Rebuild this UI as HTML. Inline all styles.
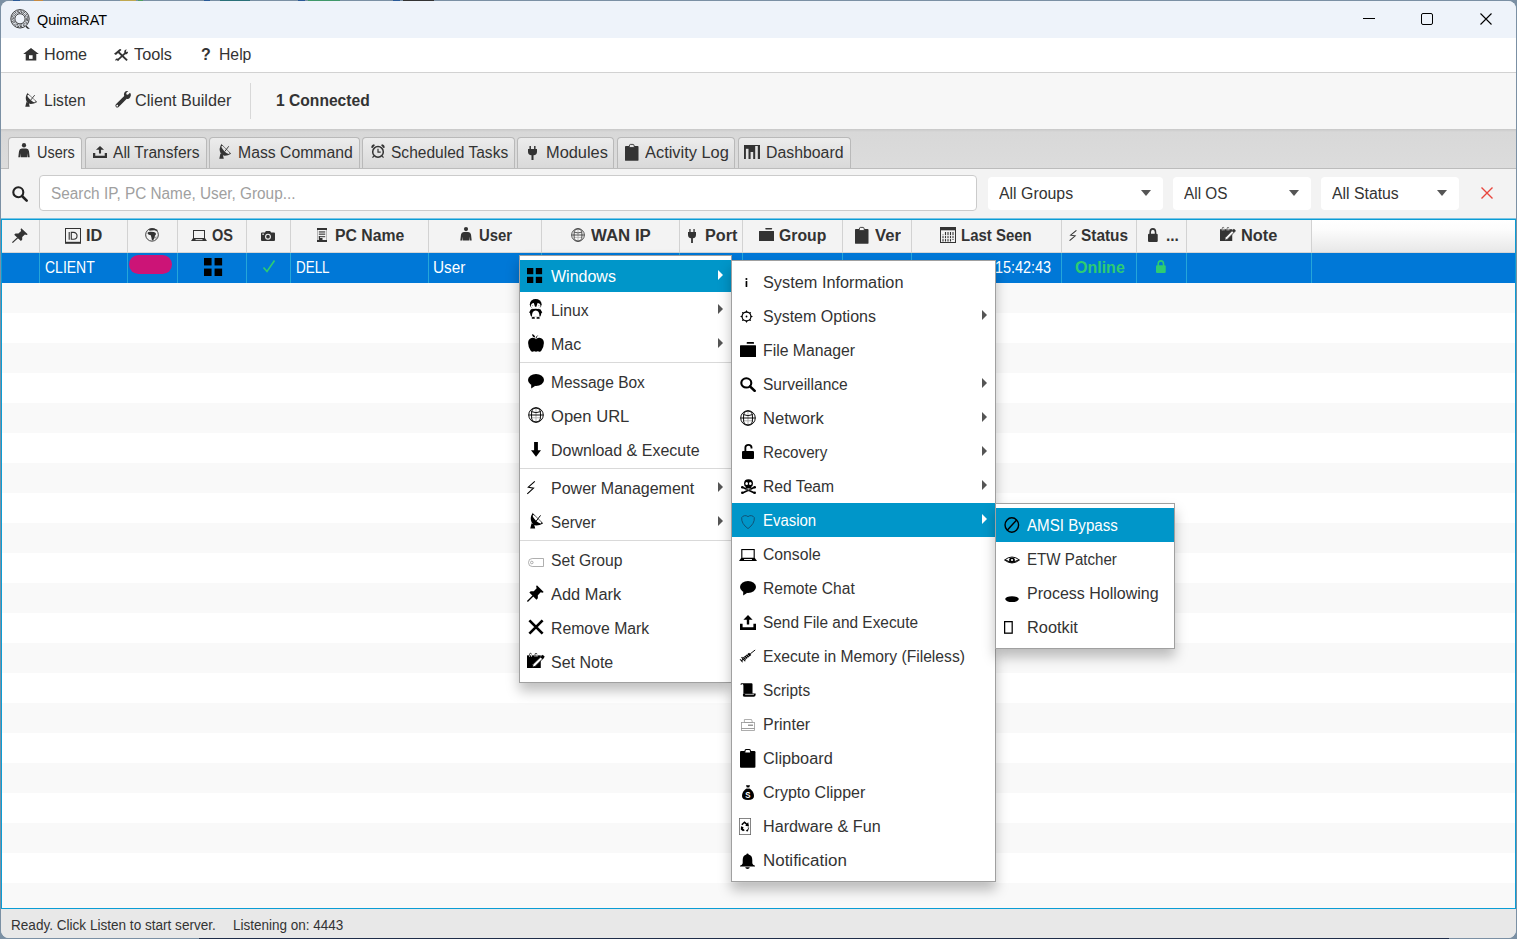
<!DOCTYPE html>
<html><head><meta charset="utf-8"><style>
*{box-sizing:border-box;margin:0;padding:0}
html,body{width:1517px;height:939px;overflow:hidden;background:#7b90a4;font-family:"Liberation Sans",sans-serif;color:#333}
.a{position:absolute}
.t{position:absolute;white-space:nowrap;line-height:16px;font-size:16px}
.b{font-weight:bold}
#win{position:absolute;left:1px;top:1px;width:1515px;height:937px;border-radius:8px;overflow:hidden;background:#f3f3f3}
#pg{position:absolute;left:-1px;top:-1px;width:1517px;height:939px}
svg{position:absolute;overflow:visible}
.tab{position:absolute;border:1px solid #b9b9b9;border-bottom:none;border-radius:4px 4px 0 0;background:linear-gradient(#ececec,#d9d9d9)}
.combo{position:absolute;background:#fff;border-radius:4px}
.arr{position:absolute;width:0;height:0;border-left:5.5px solid transparent;border-right:5.5px solid transparent;border-top:6px solid #555}
.menu{position:absolute;background:#fff;border:1px solid #a0a0a0;box-shadow:0 8px 12px rgba(0,0,0,0.25)}
.sep{position:absolute;height:1px;background:#d9d9d9}
.sa{position:absolute;width:0;height:0;border-top:5px solid transparent;border-bottom:5px solid transparent;border-left:5.5px solid #555}
</style></head><body>
<div class="a" style="left:13px;top:0;width:7px;height:1px;background:#2a5a98"></div>
<div class="a" style="left:34px;top:0;width:9px;height:1px;background:#c88a40"></div>
<div class="a" style="left:120px;top:0;width:16px;height:1px;background:#c0a850"></div>
<div class="a" style="left:138px;top:0;width:5px;height:1px;background:#50a060"></div>
<div class="a" style="left:204px;top:0;width:6px;height:1px;background:#2a5a98"></div>
<div class="a" style="left:220px;top:0;width:30px;height:1px;background:#2a7078"></div>
<div class="a" style="left:298px;top:0;width:7px;height:1px;background:#2a5a98"></div>
<div class="a" style="left:308px;top:0;width:32px;height:1px;background:#40986a"></div>
<div class="a" style="left:393px;top:0;width:7px;height:1px;background:#2a5a98"></div>
<div class="a" style="left:403px;top:0;width:31px;height:1px;background:#333"></div>
<div class="a" style="left:199px;top:938px;width:1250px;height:1px;background:#1f2d4a"></div>
<div id="win"><div id="pg">
<div class="a" style="left:0;top:0;width:1517px;height:38px;background:#eef3fa"></div>
<div class="t" style="left:37px;top:12px;font-size:15px;line-height:15px;color:#000;transform:scaleX(0.958);transform-origin:0 0;">QuimaRAT</div>
<svg style="left:10px;top:9px;color:#222;" width="20" height="20" viewBox="0 0 20 20" preserveAspectRatio="none" fill="currentColor"><g fill="none" stroke="currentColor"><circle cx="10" cy="9.8" r="9.2" stroke-width="0.9"/><circle cx="10" cy="9.8" r="7.8" stroke-width="0.8" stroke-dasharray="2.5 0.8"/><circle cx="10" cy="9.8" r="6.4" stroke-width="0.8" stroke-dasharray="3 0.8"/><circle cx="10" cy="9.8" r="5.1" stroke-width="0.9"/></g><path d="M16.5 16.8L19.9 19.9L17.2 19.6L15.6 17.8Z"/></svg>
<div class="a" style="left:1363px;top:18px;width:12px;height:1px;background:#000"></div>
<div class="a" style="left:1421px;top:13px;width:12px;height:12px;border:1px solid #000;border-radius:2px"></div>
<svg style="left:1480px;top:13px" width="12" height="12" viewBox="0 0 12 12"><path d="M0.5 0.5L11.5 11.5M11.5 0.5L0.5 11.5" stroke="#000" stroke-width="1.1"/></svg>
<div class="a" style="left:0;top:38px;width:1517px;height:34px;background:#fff"></div>
<div class="a" style="left:0;top:72px;width:1517px;height:1px;background:#d2d2d2"></div>
<div class="t" style="left:44px;top:47px;transform:scaleX(1.01);transform-origin:0 0;">Home</div>
<div class="t" style="left:134px;top:47px;transform:scaleX(1.016);transform-origin:0 0;">Tools</div>
<div class="t" style="left:219px;top:47px;transform:scaleX(0.984);transform-origin:0 0;">Help</div>
<svg style="left:23px;top:48px;color:#333;" width="16" height="13" viewBox="0 0 16 14" preserveAspectRatio="none" fill="currentColor"><path d="M8 0L15.8 6.4H13.3V13.4H2.7V6.4H0.2Z"/><rect x="6" y="7.8" width="3.6" height="3.9" fill="#fff"/></svg>
<svg style="left:114px;top:49px;color:#333;" width="14" height="12" viewBox="0 0 14 12" preserveAspectRatio="none" fill="currentColor"><path d="M0 4.7L5.4 0.3Q6.7 -0.3 7.4 0.9L1.9 5.9Z"/><path d="M4.4 3L13.1 11.4" stroke="currentColor" stroke-width="1.9"/><path d="M11.8 3.6L3.6 11.2" stroke="currentColor" stroke-width="1.8"/><path d="M10.3 3.6Q9.8 0.4 12.9 0.5L11.8 2.1L12.7 3.2L14 2.4Q14.3 5.2 11.2 5.2Z"/><path d="M2.4 9.4Q0.4 10.6 1.8 12L2.6 11L3.6 11.5L3.4 12.3Q5.6 11.6 4.4 9.8Z"/></svg>
<div class="t b" style="left:201px;top:47px;">?</div>
<div class="a" style="left:0;top:73px;width:1517px;height:56px;background:#f7f7f7"></div>
<div class="t" style="left:44px;top:93px;transform:scaleX(0.973);transform-origin:0 0;">Listen</div>
<div class="t" style="left:135px;top:93px;transform:scaleX(1.013);transform-origin:0 0;">Client Builder</div>
<div class="a" style="left:250px;top:83px;width:1px;height:36px;background:#d8d8d8"></div>
<div class="t b" style="left:276px;top:93px;transform:scaleX(0.976);transform-origin:0 0;">1 Connected</div>
<svg style="left:25px;top:93px;color:#333;" width="12" height="14" viewBox="0 0 13.3 16" preserveAspectRatio="none" fill="currentColor"><path d="M2.6 0.3Q-0.6 5 1.7 9.6Q3.4 12.2 6.1 12.5Q10 12.6 13.2 10.4Z"/><ellipse cx="7.2" cy="6.3" rx="5.9" ry="1.8" transform="rotate(43.5 7.2 6.3)" fill="#f7f7f7"/><path d="M2.6 0.3L13.2 10.4" stroke="currentColor" stroke-width="0.6"/><path d="M6.4 8L10.8 2.4" stroke="currentColor" stroke-width="1"/><path d="M1.6 10.2L4.2 11.2L5.3 15.6H0.3Z"/></svg>
<svg style="left:115px;top:92px;color:#333;" width="16" height="16" viewBox="0 0 16 16" preserveAspectRatio="none" fill="currentColor"><path d="M15.8 3.8Q16.2 1.8 15 0.7L12.9 2.8L11.5 2.5L11.2 1.1L13.3 -0.9Q11 -1.6 9.6 0.2Q8.4 1.8 9.2 3.9L0.9 12.2Q-0.2 13.4 0.9 14.9Q2.3 16.2 3.6 15L11.8 6.8Q14 7.6 15 5.6Z"/><circle cx="2.2" cy="13.7" r="0.9" fill="#f7f7f7"/></svg>
<div class="a" style="left:0;top:129px;width:1517px;height:40px;background:linear-gradient(#c8c8c8,#d8d8d8 3px,#dcdcdc)"></div>
<div class="a" style="left:0;top:168px;width:1517px;height:1px;background:#bcbcbc"></div>
<div class="tab" style="left:8px;top:137px;width:74px;height:33px;background:#f3f3f3"></div>
<div class="t" style="left:37px;top:145px;transform:scaleX(0.905);transform-origin:0 0;">Users</div>
<svg style="left:18px;top:143px;color:#333;" width="12" height="15" viewBox="0 0 12 14" preserveAspectRatio="none" fill="currentColor"><circle cx="6" cy="2.1" r="2.1"/><path d="M0.3 13.4L1 7.6Q1.4 5.3 3.8 5.1H8.2Q10.6 5.3 11 7.6L11.7 13.4H9.9L9.5 9.5L9.3 13.4H2.7L2.5 9.5L2.1 13.4Z"/></svg>
<div class="tab" style="left:85px;top:137px;width:122px;height:31px"></div>
<div class="t" style="left:113px;top:145px;transform:scaleX(0.973);transform-origin:0 0;">All Transfers</div>
<svg style="left:93px;top:146px;color:#333;" width="14" height="12" viewBox="0 0 16 15" preserveAspectRatio="none" fill="currentColor"><path d="M8 0L12.6 4.7H9.2V9.4H6.8V4.7H3.4Z"/><path d="M0 8.8H2.6V12.3H13.4V8.8H16V15H0Z"/></svg>
<div class="tab" style="left:209px;top:137px;width:151px;height:31px"></div>
<div class="t" style="left:238px;top:145px;transform:scaleX(0.985);transform-origin:0 0;">Mass Command</div>
<svg style="left:219px;top:144px;color:#333;" width="12" height="15" viewBox="0 0 13.3 16" preserveAspectRatio="none" fill="currentColor"><path d="M2.6 0.3Q-0.6 5 1.7 9.6Q3.4 12.2 6.1 12.5Q10 12.6 13.2 10.4Z"/><ellipse cx="7.2" cy="6.3" rx="5.9" ry="1.8" transform="rotate(43.5 7.2 6.3)" fill="#e3e3e3"/><path d="M2.6 0.3L13.2 10.4" stroke="currentColor" stroke-width="0.6"/><path d="M6.4 8L10.8 2.4" stroke="currentColor" stroke-width="1"/><path d="M1.6 10.2L4.2 11.2L5.3 15.6H0.3Z"/></svg>
<div class="tab" style="left:362px;top:137px;width:153px;height:31px"></div>
<div class="t" style="left:391px;top:145px;transform:scaleX(0.971);transform-origin:0 0;">Scheduled Tasks</div>
<svg style="left:371px;top:144px;color:#333;" width="14" height="14" viewBox="0 0 14 14" preserveAspectRatio="none" fill="currentColor"><circle cx="7" cy="7.9" r="5.3" fill="none" stroke="currentColor" stroke-width="1.5"/><path d="M7 4.8V8.1H9.7" fill="none" stroke="currentColor" stroke-width="1.2"/><path d="M0.4 3.8Q0 0.8 3 0.3L3.9 1.3L1.3 4.2Z"/><path d="M13.6 3.8Q14 0.8 11 0.3L10.1 1.3L12.7 4.2Z"/><path d="M2.8 12.1L1.5 13.7M11.2 12.1L12.5 13.7" stroke="currentColor" stroke-width="1.2"/></svg>
<div class="tab" style="left:517px;top:137px;width:97px;height:31px"></div>
<div class="t" style="left:546px;top:145px;transform:scaleX(1.024);transform-origin:0 0;">Modules</div>
<svg style="left:528px;top:146px;color:#333;" width="9" height="14" viewBox="0 0 8 14" preserveAspectRatio="none" fill="currentColor"><rect x="1.3" y="0" width="1.3" height="3.2"/><rect x="5.4" y="0" width="1.3" height="3.2"/><path d="M0 3H8V5.8Q8 8.9 4.9 9.3V14H3.1V9.3Q0 8.9 0 5.8Z"/></svg>
<div class="tab" style="left:617px;top:137px;width:118px;height:31px"></div>
<div class="t" style="left:645px;top:145px;transform:scaleX(1.025);transform-origin:0 0;">Activity Log</div>
<svg style="left:625px;top:144px;color:#333;" width="14" height="17" viewBox="0 0 14 17" preserveAspectRatio="none" fill="currentColor"><rect x="0" y="1.9" width="13.5" height="14.9" rx="0.9"/><path d="M4 3.6L4.6 0.9Q4.8 0.4 5.4 0.4H8.1Q8.7 0.4 8.9 0.9L9.5 3.6Z" fill="#e3e3e3" stroke="currentColor" stroke-width="0.9"/></svg>
<div class="tab" style="left:738px;top:137px;width:113px;height:31px"></div>
<div class="t" style="left:766px;top:145px;transform:scaleX(0.99);transform-origin:0 0;">Dashboard</div>
<svg style="left:744px;top:145px;color:#333;" width="16" height="14" viewBox="0 0 16 14" preserveAspectRatio="none" fill="currentColor"><rect x="0" y="0" width="16" height="14"/><rect x="1.9" y="3.8" width="2.6" height="10.2" fill="#e3e3e3"/><rect x="6.6" y="7" width="2.6" height="7" fill="#e3e3e3"/><rect x="11.2" y="1" width="2.6" height="13" fill="#e3e3e3"/></svg>
<div class="a" style="left:1px;top:169px;width:1515px;height:740px;background:#f3f3f3"></div>
<svg style="left:12px;top:186px;color:#222;" width="16" height="16" viewBox="0 0 16 16" preserveAspectRatio="none" fill="currentColor"><circle cx="6.3" cy="6.3" r="5" fill="none" stroke="currentColor" stroke-width="2.1"/><path d="M10 10L14.7 14.7" stroke="currentColor" stroke-width="2.6" stroke-linecap="round"/></svg>
<div class="a" style="left:39px;top:175px;width:938px;height:36px;background:#fff;border:1px solid #cbcbcb;border-radius:4px"></div>
<div class="t" style="left:51px;top:186px;color:#a0a0a0;transform:scaleX(0.959);transform-origin:0 0;">Search IP, PC Name, User, Group...</div>
<div class="combo" style="left:988px;top:177px;width:175px;height:33px"></div>
<div class="t" style="left:999px;top:186px;transform:scaleX(0.992);transform-origin:0 0;">All Groups</div>
<div class="arr" style="left:1141px;top:190px"></div>
<div class="combo" style="left:1173px;top:177px;width:138px;height:33px"></div>
<div class="t" style="left:1184px;top:186px;transform:scaleX(0.958);transform-origin:0 0;">All OS</div>
<div class="arr" style="left:1289px;top:190px"></div>
<div class="combo" style="left:1321px;top:177px;width:138px;height:33px"></div>
<div class="t" style="left:1332px;top:186px;transform:scaleX(0.988);transform-origin:0 0;">All Status</div>
<div class="arr" style="left:1437px;top:190px"></div>
<svg style="left:1481px;top:187px" width="12" height="12" viewBox="0 0 12 12"><path d="M0.5 0.5L11.5 11.5M11.5 0.5L0.5 11.5" stroke="#e8453c" stroke-width="1.35"/></svg>
<div class="a" style="left:1px;top:218px;width:1515px;height:1px;background:#7cc4e4"></div>
<div class="a" style="left:1px;top:219px;width:1515px;height:690px;border:1px solid #0a9dd5;background:#fff"></div>
<div class="a" style="left:2px;top:253px;width:1513px;height:30px;background:#0078d7"></div>
<div class="a" style="left:2px;top:283px;width:1513px;height:30px;background:#f9f9f9"></div>
<div class="a" style="left:2px;top:313px;width:1513px;height:30px;background:#ffffff"></div>
<div class="a" style="left:2px;top:343px;width:1513px;height:30px;background:#f9f9f9"></div>
<div class="a" style="left:2px;top:373px;width:1513px;height:30px;background:#ffffff"></div>
<div class="a" style="left:2px;top:403px;width:1513px;height:30px;background:#f9f9f9"></div>
<div class="a" style="left:2px;top:433px;width:1513px;height:30px;background:#ffffff"></div>
<div class="a" style="left:2px;top:463px;width:1513px;height:30px;background:#f9f9f9"></div>
<div class="a" style="left:2px;top:493px;width:1513px;height:30px;background:#ffffff"></div>
<div class="a" style="left:2px;top:523px;width:1513px;height:30px;background:#f9f9f9"></div>
<div class="a" style="left:2px;top:553px;width:1513px;height:30px;background:#ffffff"></div>
<div class="a" style="left:2px;top:583px;width:1513px;height:30px;background:#f9f9f9"></div>
<div class="a" style="left:2px;top:613px;width:1513px;height:30px;background:#ffffff"></div>
<div class="a" style="left:2px;top:643px;width:1513px;height:30px;background:#f9f9f9"></div>
<div class="a" style="left:2px;top:673px;width:1513px;height:30px;background:#ffffff"></div>
<div class="a" style="left:2px;top:703px;width:1513px;height:30px;background:#f9f9f9"></div>
<div class="a" style="left:2px;top:733px;width:1513px;height:30px;background:#ffffff"></div>
<div class="a" style="left:2px;top:763px;width:1513px;height:30px;background:#f9f9f9"></div>
<div class="a" style="left:2px;top:793px;width:1513px;height:30px;background:#ffffff"></div>
<div class="a" style="left:2px;top:823px;width:1513px;height:30px;background:#f9f9f9"></div>
<div class="a" style="left:2px;top:853px;width:1513px;height:30px;background:#ffffff"></div>
<div class="a" style="left:2px;top:883px;width:1513px;height:25px;background:#f9f9f9"></div>
<div class="a" style="left:2px;top:220px;width:1513px;height:33px;background:#f3f3f3;border-bottom:1px solid #d6d6d6"></div>
<div class="a" style="left:1312px;top:220px;width:203px;height:32px;background:linear-gradient(#ffffff,#fcfcfc 30%,#e8e8e8)"></div>
<div class="a" style="left:39px;top:220px;width:1px;height:33px;background:#d2d2d2"></div>
<div class="a" style="left:39px;top:253px;width:1px;height:30px;background:#25a6d9"></div>
<div class="a" style="left:127px;top:220px;width:1px;height:33px;background:#d2d2d2"></div>
<div class="a" style="left:127px;top:253px;width:1px;height:30px;background:#25a6d9"></div>
<div class="a" style="left:177px;top:220px;width:1px;height:33px;background:#d2d2d2"></div>
<div class="a" style="left:177px;top:253px;width:1px;height:30px;background:#25a6d9"></div>
<div class="a" style="left:246px;top:220px;width:1px;height:33px;background:#d2d2d2"></div>
<div class="a" style="left:246px;top:253px;width:1px;height:30px;background:#25a6d9"></div>
<div class="a" style="left:290px;top:220px;width:1px;height:33px;background:#d2d2d2"></div>
<div class="a" style="left:290px;top:253px;width:1px;height:30px;background:#25a6d9"></div>
<div class="a" style="left:428px;top:220px;width:1px;height:33px;background:#d2d2d2"></div>
<div class="a" style="left:428px;top:253px;width:1px;height:30px;background:#25a6d9"></div>
<div class="a" style="left:541px;top:220px;width:1px;height:33px;background:#d2d2d2"></div>
<div class="a" style="left:541px;top:253px;width:1px;height:30px;background:#25a6d9"></div>
<div class="a" style="left:679px;top:220px;width:1px;height:33px;background:#d2d2d2"></div>
<div class="a" style="left:679px;top:253px;width:1px;height:30px;background:#25a6d9"></div>
<div class="a" style="left:742px;top:220px;width:1px;height:33px;background:#d2d2d2"></div>
<div class="a" style="left:742px;top:253px;width:1px;height:30px;background:#25a6d9"></div>
<div class="a" style="left:842px;top:220px;width:1px;height:33px;background:#d2d2d2"></div>
<div class="a" style="left:842px;top:253px;width:1px;height:30px;background:#25a6d9"></div>
<div class="a" style="left:911px;top:220px;width:1px;height:33px;background:#d2d2d2"></div>
<div class="a" style="left:911px;top:253px;width:1px;height:30px;background:#25a6d9"></div>
<div class="a" style="left:1061px;top:220px;width:1px;height:33px;background:#d2d2d2"></div>
<div class="a" style="left:1061px;top:253px;width:1px;height:30px;background:#25a6d9"></div>
<div class="a" style="left:1136px;top:220px;width:1px;height:33px;background:#d2d2d2"></div>
<div class="a" style="left:1136px;top:253px;width:1px;height:30px;background:#25a6d9"></div>
<div class="a" style="left:1186px;top:220px;width:1px;height:33px;background:#d2d2d2"></div>
<div class="a" style="left:1186px;top:253px;width:1px;height:30px;background:#25a6d9"></div>
<div class="a" style="left:1311px;top:220px;width:1px;height:33px;background:#d2d2d2"></div>
<div class="a" style="left:1311px;top:253px;width:1px;height:30px;background:#25a6d9"></div>
<div class="t b" style="left:86px;top:228px;transform:scaleX(1.02);transform-origin:0 0;">ID</div>
<div class="t b" style="left:212px;top:228px;transform:scaleX(0.909);transform-origin:0 0;">OS</div>
<div class="t b" style="left:335px;top:228px;transform:scaleX(0.986);transform-origin:0 0;">PC Name</div>
<div class="t b" style="left:479px;top:228px;transform:scaleX(0.931);transform-origin:0 0;">User</div>
<div class="t b" style="left:591px;top:228px;transform:scaleX(1.051);transform-origin:0 0;">WAN IP</div>
<div class="t b" style="left:705px;top:228px;transform:scaleX(1.01);transform-origin:0 0;">Port</div>
<div class="t b" style="left:779px;top:228px;transform:scaleX(0.985);transform-origin:0 0;">Group</div>
<div class="t b" style="left:875px;top:228px;transform:scaleX(1.04);transform-origin:0 0;">Ver</div>
<div class="t b" style="left:961px;top:228px;transform:scaleX(0.935);transform-origin:0 0;">Last Seen</div>
<div class="t b" style="left:1081px;top:228px;transform:scaleX(0.963);transform-origin:0 0;">Status</div>
<div class="t b" style="left:1166px;top:228px;transform:scaleX(0.967);transform-origin:0 0;">...</div>
<div class="t b" style="left:1241px;top:228px;transform:scaleX(1.023);transform-origin:0 0;">Note</div>
<svg style="left:12px;top:228px;color:#333;" width="16" height="15" viewBox="0 0 16 16" preserveAspectRatio="none" fill="currentColor"><path d="M9.3 0.3L15.7 6.7L14.6 7.4L12.9 6.9L10.2 9.6L10.2 12.5L8.9 13.8L2.2 7.1L3.5 5.8L6.4 5.8L9.1 3.1L8.6 1.4Z"/><path d="M5.8 10.2L0.4 15.6" stroke="currentColor" stroke-width="1.3"/></svg>
<svg style="left:65px;top:228px;color:#333;" width="16" height="16" viewBox="0 0 16 16" preserveAspectRatio="none" fill="currentColor"><rect x="0.5" y="0.5" width="15" height="14" fill="none" stroke="currentColor" stroke-width="1"/><rect x="0" y="13.8" width="16" height="2"/><path d="M4.2 3.9V11.8" stroke="currentColor" stroke-width="1.1"/><path d="M6.3 4.4H8.6A3.4 3.4 0 0 1 8.6 11.3H6.3Z" fill="none" stroke="currentColor" stroke-width="1.1"/></svg>
<svg style="left:145px;top:228px;color:#333;" width="14" height="14" viewBox="0 0 15 15" preserveAspectRatio="none" fill="currentColor"><circle cx="7.5" cy="7.3" r="6.8" fill="none" stroke="currentColor" stroke-width="1"/><path d="M4.3 1.3Q9 -0.2 13.2 1.8L13.8 2.9L11.8 3L10 2.5L7 2.7L4.6 3Z"/><path d="M2.9 4.7Q3.4 4.1 6 4.1L9.6 4.2L11.5 5.3L11.7 7L10.6 8.3L10.3 10.5L9.3 12.3L8.2 13.4L7.3 12.6L6.8 10L6.2 7.7L4.2 7.3L2.8 6.1Z"/><path d="M11.4 9.5L12.2 9.2L12 11.1L11.3 11.2Z"/></svg>
<svg style="left:191px;top:230px;color:#333;" width="16" height="11" viewBox="0 0 16 11" preserveAspectRatio="none" fill="currentColor"><rect x="2.5" y="0.5" width="11" height="8" fill="none" stroke="currentColor" stroke-width="1"/><path d="M0 11L1.9 8.3H14.1L16 11Z"/><path d="M4.5 9.6H11.5" stroke="#f3f3f3" stroke-width="0.9"/></svg>
<svg style="left:261px;top:231px;color:#333;" width="14" height="10" viewBox="0 0 14 10" preserveAspectRatio="none" fill="currentColor"><path d="M0 2.6Q0 1.6 1 1.6H3.9L4.9 0H9.1L10.1 1.6H13Q14 1.6 14 2.6V9Q14 10 13 10H1Q0 10 0 9Z"/><circle cx="7" cy="5.7" r="2.4" fill="none" stroke="#f3f3f3" stroke-width="1.1"/><rect x="1.3" y="2.6" width="1.6" height="1.2" fill="#f3f3f3"/></svg>
<svg style="left:317px;top:228px;color:#333;" width="10" height="14" viewBox="0 0 10 14" preserveAspectRatio="none" fill="currentColor"><rect x="0.4" y="0.5" width="9.2" height="13" fill="none" stroke="currentColor" stroke-width="0.7" stroke-opacity="0.45"/><rect x="0" y="0" width="10" height="2"/><rect x="1.8" y="3.4" width="6.4" height="1.1"/><rect x="1.8" y="5.6" width="6.4" height="1.1"/><rect x="1.8" y="8.2" width="6.4" height="1"/><rect x="1.8" y="8.2" width="1.2" height="4"/><rect x="0" y="12" width="10" height="2"/><rect x="3" y="10" width="2.5" height="2"/></svg>
<svg style="left:460px;top:227px;color:#333;" width="12" height="14" viewBox="0 0 12 14" preserveAspectRatio="none" fill="currentColor"><circle cx="6" cy="2.1" r="2.1"/><path d="M0.3 13.4L1 7.6Q1.4 5.3 3.8 5.1H8.2Q10.6 5.3 11 7.6L11.7 13.4H9.9L9.5 9.5L9.3 13.4H2.7L2.5 9.5L2.1 13.4Z"/></svg>
<svg style="left:571px;top:228px;color:#333;" width="14" height="14" viewBox="0 0 16 16" preserveAspectRatio="none" fill="currentColor"><g fill="none" stroke-width="0.95"><path d="M8 1V15M3.6 10.8H12.4" stroke="#b0b0b0"/><circle cx="8" cy="8" r="7.3" stroke="currentColor"/><path d="M3.7 4Q3.3 8 3.7 12Q4.6 15 8 15.1Q11.4 15 12.3 12Q12.7 8 12.3 4Q11.4 1 8 0.9Q4.6 1 3.7 4Z" stroke="currentColor"/><path d="M0.7 8H15.3M3.6 4.6Q8 6.8 12.4 4.6" stroke="currentColor"/></g></svg>
<svg style="left:688px;top:229px;color:#333;" width="8" height="14" viewBox="0 0 8 14" preserveAspectRatio="none" fill="currentColor"><rect x="1.3" y="0" width="1.3" height="3.2"/><rect x="5.4" y="0" width="1.3" height="3.2"/><path d="M0 3H8V5.8Q8 8.9 4.9 9.3V14H3.1V9.3Q0 8.9 0 5.8Z"/></svg>
<svg style="left:759px;top:228px;color:#333;" width="15" height="13" viewBox="0 0 15 13" preserveAspectRatio="none" fill="currentColor"><rect x="6.2" y="0" width="7" height="1.6" rx="0.8"/><rect x="0" y="2.9" width="15" height="10.1" rx="0.3"/></svg>
<svg style="left:855px;top:227px;color:#333;" width="14" height="17" viewBox="0 0 14 17" preserveAspectRatio="none" fill="currentColor"><rect x="0" y="1.9" width="13.5" height="14.9" rx="0.9"/><path d="M4 3.6L4.6 0.9Q4.8 0.4 5.4 0.4H8.1Q8.7 0.4 8.9 0.9L9.5 3.6Z" fill="#f3f3f3" stroke="currentColor" stroke-width="0.9"/></svg>
<svg style="left:940px;top:227px;color:#333;" width="16" height="16" viewBox="0 0 16 16" preserveAspectRatio="none" fill="currentColor"><rect x="0.5" y="0.5" width="15" height="15" fill="none" stroke="currentColor" stroke-width="1"/><rect x="0" y="0" width="16" height="3.3"/><path d="M3 7.5V14.5M5.5 5V14.5M8 5V14.5M10.5 5V14.5M13 5V13" stroke="currentColor" stroke-width="1.1"/><path d="M1 8.6H15M1 11.6H15" stroke="#f3f3f3" stroke-width="0.9"/></svg>
<svg style="left:1069px;top:230px;color:#333;" width="8" height="11" viewBox="0 0 8 12" preserveAspectRatio="none" fill="currentColor"><path d="M7.4 0.4L1.6 5.7L6.2 6.3L0.6 11.6" fill="none" stroke="currentColor" stroke-width="1.05"/></svg>
<svg style="left:1148px;top:228px;color:#333;" width="10" height="14" viewBox="0 0 11 13" preserveAspectRatio="none" fill="currentColor"><path d="M2.4 6V4Q2.4 0.8 5.35 0.8Q8.3 0.8 8.3 4V6" fill="none" stroke="currentColor" stroke-width="1.7"/><rect x="0" y="5.3" width="10.7" height="7.7" rx="1.2"/></svg>
<svg style="left:1220px;top:227px;color:#333;" width="16" height="14" viewBox="0 0 17 14" preserveAspectRatio="none" fill="currentColor"><rect x="0" y="2.2" width="13" height="11.8"/><path d="M2.4 3.5V1.3Q2.4 0.3 3.3 0.3Q4.2 0.3 4.2 1.3V3.5M7.6 3.5V1.3Q7.6 0.3 8.5 0.3Q9.4 0.3 9.4 1.3V3.5" fill="none" stroke="#f3f3f3" stroke-width="0.8"/><path d="M2.4 2.5V1.3Q2.4 0.3 3.3 0.3Q4.2 0.3 4.2 1.3M7.6 2.5V1.3Q7.6 0.3 8.5 0.3Q9.4 0.3 9.4 1.3" fill="none" stroke="currentColor" stroke-width="0.7"/><path d="M5.2 13.2L5.6 10.6L14 2.6L15.9 4.4L7.6 12.5Z" fill="#f3f3f3" stroke="currentColor" stroke-width="0.8"/><path d="M12.6 3.9L14.6 5.8L16.8 3.6L14.8 1.7Z"/></svg>
<div class="t" style="left:45px;top:260px;color:#fff;transform:scaleX(0.874);transform-origin:0 0;">CLIENT</div>
<div class="a" style="left:129px;top:255px;width:43px;height:19px;border-radius:10px;background:#cc1477"></div>
<svg style="left:204px;top:258px;color:#000;" width="18" height="18" viewBox="0 0 15 15" preserveAspectRatio="none" fill="currentColor"><rect x="0" y="0" width="6.3" height="6.2"/><rect x="8.8" y="0" width="6.3" height="6.2"/><rect x="0" y="8.8" width="6.3" height="6.2"/><rect x="8.8" y="8.8" width="6.3" height="6.2"/></svg>
<svg style="left:262px;top:259px" width="14" height="14" viewBox="0 0 14 14"><path d="M1.5 8.5L5 12.5L12.5 1.5" stroke="#2ecc71" stroke-width="1.6" fill="none"/></svg>
<div class="t" style="left:296px;top:260px;color:#fff;transform:scaleX(0.838);transform-origin:0 0;">DELL</div>
<div class="t" style="left:433px;top:260px;color:#fff;transform:scaleX(0.958);transform-origin:0 0;">User</div>
<div class="t" style="left:995px;top:260px;color:#fff;transform:scaleX(0.9);transform-origin:0 0;">15:42:43</div>
<div class="t b" style="left:1075px;top:260px;color:#2ecc71;">Online</div>
<svg style="left:1156px;top:260px;color:#2ecc71;" width="10" height="13" viewBox="0 0 11 13" preserveAspectRatio="none" fill="currentColor"><path d="M2.4 6V4Q2.4 0.8 5.35 0.8Q8.3 0.8 8.3 4V6" fill="none" stroke="currentColor" stroke-width="1.7"/><rect x="0" y="5.3" width="10.7" height="7.7" rx="1.2"/></svg>
<div class="a" style="left:0;top:909px;width:1517px;height:30px;background:#e8e8e8"></div>
<div class="t" style="left:11px;top:918px;font-size:14px;line-height:14px;transform:scaleX(0.969);transform-origin:0 0;">Ready. Click Listen to start server.</div>
<div class="t" style="left:233px;top:918px;font-size:14px;line-height:14px;transform:scaleX(0.963);transform-origin:0 0;">Listening on: 4443</div>
<div class="menu" style="left:519px;top:255px;width:213px;height:428px"></div>
<div class="a" style="left:520px;top:260px;width:211px;height:32px;background:#0096c9"></div>
<div class="t" style="left:551px;top:269px;color:#fff;">Windows</div>
<svg style="left:527px;top:268px;color:#000;" width="15" height="15" viewBox="0 0 15 15" preserveAspectRatio="none" fill="currentColor"><rect x="0" y="0" width="6.3" height="6.2"/><rect x="8.8" y="0" width="6.3" height="6.2"/><rect x="0" y="8.8" width="6.3" height="6.2"/><rect x="8.8" y="8.8" width="6.3" height="6.2"/></svg>
<div class="sa" style="left:718px;top:270px;border-left-color:#fff"></div>
<div class="t" style="left:551px;top:303px;color:#333;transform:scaleX(0.981);transform-origin:0 0;">Linux</div>
<svg style="left:529px;top:299px;color:#000;" width="14" height="20" viewBox="0 0 14 20" preserveAspectRatio="none" fill="currentColor"><ellipse cx="6.7" cy="5.2" rx="5.9" ry="5.1"/><ellipse cx="6.7" cy="6.9" rx="4.8" ry="3.1" fill="#fff"/><path d="M4.6 3.2Q6.7 2.6 8.8 3.2L7.4 7.8H6Z"/><circle cx="3.6" cy="6.6" r="0.6" fill="#999"/><circle cx="9.8" cy="6.6" r="0.6" fill="#999"/><path d="M2 10.3Q6.7 9.4 11.4 10.3L13.3 13.6L12.4 14.1Q12.1 16.6 11.3 17.4H2.1Q1.3 16.6 1 14.1L0.1 13.6Z"/><path d="M2.9 17.8Q2.9 11.6 6.7 11.6Q10.5 11.6 10.5 17.8Z" fill="#fff"/><ellipse cx="4.3" cy="18.9" rx="1.7" ry="0.9"/><ellipse cx="9.1" cy="18.9" rx="1.7" ry="0.9"/></svg>
<div class="sa" style="left:718px;top:304px;border-left-color:#555"></div>
<div class="t" style="left:551px;top:337px;color:#333;">Mac</div>
<svg style="left:528px;top:334px;color:#000;" width="16" height="18" viewBox="0 0 16 18" preserveAspectRatio="none" fill="currentColor"><path d="M8 5.2Q10.5 3.2 13.2 4.2Q15.8 5.3 15.9 9Q15.8 13.5 13.3 16.8Q12.2 18.2 10.8 17.6Q9.7 17 8 17.7Q6.3 17 5.2 17.6Q3.8 18.2 2.7 16.8Q0.2 13.5 0.1 9Q0.2 5.3 2.8 4.2Q5.5 3.2 8 5.2Z"/><path d="M4 0.2Q6.8 0.6 7.2 3.6Q4.6 3.4 4 0.2Z"/><path d="M8 4.6Q8.2 2.6 9.6 1.6" stroke="currentColor" stroke-width="0.9" fill="none"/></svg>
<div class="sa" style="left:718px;top:338px;border-left-color:#555"></div>
<div class="sep" style="left:520px;top:362px;width:211px"></div>
<div class="t" style="left:551px;top:375px;color:#333;transform:scaleX(0.968);transform-origin:0 0;">Message Box</div>
<svg style="left:528px;top:374px;color:#000;" width="16" height="15" viewBox="0 0 16 15" preserveAspectRatio="none" fill="currentColor"><ellipse cx="8" cy="6" rx="8" ry="6"/><path d="M3.2 10.2L3.2 14.5L7.8 11.5Z"/></svg>
<div class="t" style="left:551px;top:409px;color:#333;transform:scaleX(1.036);transform-origin:0 0;">Open URL</div>
<svg style="left:528px;top:407px;color:#000;" width="16" height="16" viewBox="0 0 16 16" preserveAspectRatio="none" fill="currentColor"><g fill="none" stroke-width="0.95"><path d="M8 1V15M3.6 10.8H12.4" stroke="#b0b0b0"/><circle cx="8" cy="8" r="7.3" stroke="currentColor"/><path d="M3.7 4Q3.3 8 3.7 12Q4.6 15 8 15.1Q11.4 15 12.3 12Q12.7 8 12.3 4Q11.4 1 8 0.9Q4.6 1 3.7 4Z" stroke="currentColor"/><path d="M0.7 8H15.3M3.6 4.6Q8 6.8 12.4 4.6" stroke="currentColor"/></g></svg>
<div class="t" style="left:551px;top:443px;color:#333;">Download &amp; Execute</div>
<svg style="left:531px;top:442px;color:#000;" width="10" height="15" viewBox="0 0 10 15" preserveAspectRatio="none" fill="currentColor"><path d="M3.1 0H6.9V8.2H10L5 14.7L0 8.2H3.1Z"/></svg>
<div class="sep" style="left:520px;top:468px;width:211px"></div>
<div class="t" style="left:551px;top:481px;color:#333;">Power Management</div>
<svg style="left:527px;top:481px;color:#000;" width="8" height="13" viewBox="0 0 8 13" preserveAspectRatio="none" fill="currentColor"><path d="M7.8 0.4L1.3 6.2L6.5 7.2L0.3 12.8" fill="none" stroke="currentColor" stroke-width="1.1"/></svg>
<div class="sa" style="left:718px;top:482px;border-left-color:#555"></div>
<div class="t" style="left:551px;top:515px;color:#333;transform:scaleX(0.952);transform-origin:0 0;">Server</div>
<svg style="left:530px;top:513px;color:#000;" width="13" height="16" viewBox="0 0 13.3 16" preserveAspectRatio="none" fill="currentColor"><path d="M2.6 0.3Q-0.6 5 1.7 9.6Q3.4 12.2 6.1 12.5Q10 12.6 13.2 10.4Z"/><ellipse cx="7.2" cy="6.3" rx="5.9" ry="1.8" transform="rotate(43.5 7.2 6.3)" fill="#fff"/><path d="M2.6 0.3L13.2 10.4" stroke="currentColor" stroke-width="0.6"/><path d="M6.4 8L10.8 2.4" stroke="currentColor" stroke-width="1"/><path d="M1.6 10.2L4.2 11.2L5.3 15.6H0.3Z"/></svg>
<div class="sa" style="left:718px;top:516px;border-left-color:#555"></div>
<div class="sep" style="left:520px;top:540px;width:211px"></div>
<div class="t" style="left:551px;top:553px;color:#333;transform:scaleX(0.981);transform-origin:0 0;">Set Group</div>
<svg style="left:528px;top:558px;color:#9a9a9a;" width="16" height="9" viewBox="0 0 16 9" preserveAspectRatio="none" fill="currentColor"><path d="M4.2 0.5H15.5V8.5H4.2Q0.5 8.5 0.5 4.5Q0.5 0.5 4.2 0.5Z" fill="none" stroke="currentColor" stroke-width="0.8"/><circle cx="3.8" cy="4.5" r="1.3" fill="none" stroke="currentColor" stroke-width="0.8"/></svg>
<div class="t" style="left:551px;top:587px;color:#333;transform:scaleX(1.025);transform-origin:0 0;">Add Mark</div>
<svg style="left:527px;top:585px;color:#000;" width="17" height="17" viewBox="0 0 16 16" preserveAspectRatio="none" fill="currentColor"><path d="M9.3 0.3L15.7 6.7L14.6 7.4L12.9 6.9L10.2 9.6L10.2 12.5L8.9 13.8L2.2 7.1L3.5 5.8L6.4 5.8L9.1 3.1L8.6 1.4Z"/><path d="M5.8 10.2L0.4 15.6" stroke="currentColor" stroke-width="1.3"/></svg>
<div class="t" style="left:551px;top:621px;color:#333;transform:scaleX(0.986);transform-origin:0 0;">Remove Mark</div>
<svg style="left:528px;top:619px;color:#000;" width="16" height="16" viewBox="0 0 16 16" preserveAspectRatio="none" fill="currentColor"><path d="M1.4 1.4L14.6 14.6M14.6 1.4L1.4 14.6" stroke="currentColor" stroke-width="2.7"/></svg>
<div class="t" style="left:551px;top:655px;color:#333;">Set Note</div>
<svg style="left:527px;top:653px;color:#000;" width="18" height="15" viewBox="0 0 17 14" preserveAspectRatio="none" fill="currentColor"><rect x="0" y="2.2" width="13" height="11.8"/><path d="M2.4 3.5V1.3Q2.4 0.3 3.3 0.3Q4.2 0.3 4.2 1.3V3.5M7.6 3.5V1.3Q7.6 0.3 8.5 0.3Q9.4 0.3 9.4 1.3V3.5" fill="none" stroke="#fff" stroke-width="0.8"/><path d="M2.4 2.5V1.3Q2.4 0.3 3.3 0.3Q4.2 0.3 4.2 1.3M7.6 2.5V1.3Q7.6 0.3 8.5 0.3Q9.4 0.3 9.4 1.3" fill="none" stroke="currentColor" stroke-width="0.7"/><path d="M5.2 13.2L5.6 10.6L14 2.6L15.9 4.4L7.6 12.5Z" fill="#fff" stroke="currentColor" stroke-width="0.8"/><path d="M12.6 3.9L14.6 5.8L16.8 3.6L14.8 1.7Z"/></svg>
<div class="menu" style="left:731px;top:260px;width:265px;height:622px"></div>
<div class="t" style="left:763px;top:275px;color:#333;transform:scaleX(1.019);transform-origin:0 0;">System Information</div>
<svg style="left:745px;top:278px;color:#000;" width="3" height="9" viewBox="0 0 3 9" preserveAspectRatio="none" fill="currentColor"><circle cx="1.4" cy="1" r="1.05"/><rect x="0.6" y="3" width="1.7" height="6" rx="0.5"/></svg>
<div class="t" style="left:763px;top:309px;color:#333;">System Options</div>
<svg style="left:740px;top:310px;color:#000;" width="13" height="13" viewBox="0 0 13 13" preserveAspectRatio="none" fill="currentColor"><circle cx="6.5" cy="6.5" r="4.4" fill="none" stroke="currentColor" stroke-width="1.15"/><circle cx="6.5" cy="6.5" r="0.9"/><path d="M6.5 0L7.6 2.1H5.4ZM6.5 13L7.6 10.9H5.4ZM0 6.5L2.1 5.4V7.6ZM13 6.5L10.9 5.4V7.6ZM1.9 1.9L4.1 2.6L2.6 4.1ZM11.1 1.9L8.9 2.6L10.4 4.1ZM1.9 11.1L4.1 10.4L2.6 8.9ZM11.1 11.1L8.9 10.4L10.4 8.9Z"/></svg>
<div class="sa" style="left:982px;top:310px;border-left-color:#555"></div>
<div class="t" style="left:763px;top:343px;color:#333;transform:scaleX(0.986);transform-origin:0 0;">File Manager</div>
<svg style="left:740px;top:342px;color:#000;" width="16" height="15" viewBox="0 0 15 13" preserveAspectRatio="none" fill="currentColor"><rect x="6.2" y="0" width="7" height="1.6" rx="0.8"/><rect x="0" y="2.9" width="15" height="10.1" rx="0.3"/></svg>
<div class="t" style="left:763px;top:377px;color:#333;transform:scaleX(0.972);transform-origin:0 0;">Surveillance</div>
<svg style="left:740px;top:377px;color:#000;" width="16" height="15" viewBox="0 0 16 16" preserveAspectRatio="none" fill="currentColor"><circle cx="6.3" cy="6.3" r="5" fill="none" stroke="currentColor" stroke-width="2.1"/><path d="M10 10L14.7 14.7" stroke="currentColor" stroke-width="2.6" stroke-linecap="round"/></svg>
<div class="sa" style="left:982px;top:378px;border-left-color:#555"></div>
<div class="t" style="left:763px;top:411px;color:#333;transform:scaleX(1.038);transform-origin:0 0;">Network</div>
<svg style="left:740px;top:410px;color:#000;" width="16" height="16" viewBox="0 0 16 16" preserveAspectRatio="none" fill="currentColor"><g fill="none" stroke-width="0.95"><path d="M8 1V15M3.6 10.8H12.4" stroke="#b0b0b0"/><circle cx="8" cy="8" r="7.3" stroke="currentColor"/><path d="M3.7 4Q3.3 8 3.7 12Q4.6 15 8 15.1Q11.4 15 12.3 12Q12.7 8 12.3 4Q11.4 1 8 0.9Q4.6 1 3.7 4Z" stroke="currentColor"/><path d="M0.7 8H15.3M3.6 4.6Q8 6.8 12.4 4.6" stroke="currentColor"/></g></svg>
<div class="sa" style="left:982px;top:412px;border-left-color:#555"></div>
<div class="t" style="left:763px;top:445px;color:#333;transform:scaleX(0.951);transform-origin:0 0;">Recovery</div>
<svg style="left:742px;top:444px;color:#000;" width="12" height="15" viewBox="0 0 11 15" preserveAspectRatio="none" fill="currentColor"><path d="M3.1 7.5V3.6Q3.1 0.9 5.9 0.9Q8.7 0.9 8.7 3.6V4.5" fill="none" stroke="currentColor" stroke-width="1.7"/><rect x="0" y="6.9" width="11" height="8.1" rx="1"/></svg>
<div class="sa" style="left:982px;top:446px;border-left-color:#555"></div>
<div class="t" style="left:763px;top:479px;color:#333;transform:scaleX(0.979);transform-origin:0 0;">Red Team</div>
<svg style="left:741px;top:479px;color:#000;" width="15" height="15" viewBox="0 0 15 15" preserveAspectRatio="none" fill="currentColor"><path d="M7.5 0.3Q12 0.3 12 4.6Q12 7 10.3 7.8V9.6H4.7V7.8Q3 7 3 4.6Q3 0.3 7.5 0.3Z"/><ellipse cx="5.7" cy="4.5" rx="1.3" ry="1.5" fill="#fff"/><ellipse cx="9.3" cy="4.5" rx="1.3" ry="1.5" fill="#fff"/><path d="M1.5 8.2L13.5 14M13.5 8.2L1.5 14" stroke="currentColor" stroke-width="1.7"/><circle cx="1.3" cy="8.3" r="1.3"/><circle cx="13.7" cy="8.3" r="1.3"/><circle cx="1.3" cy="13.8" r="1.3"/><circle cx="13.7" cy="13.8" r="1.3"/><path d="M6 9.6V11.3M9 9.6V11.3M7.5 9.6V11.3" stroke="#fff" stroke-width="0.5"/></svg>
<div class="sa" style="left:982px;top:480px;border-left-color:#555"></div>
<div class="a" style="left:732px;top:503px;width:263px;height:34px;background:#0096c9"></div>
<div class="t" style="left:763px;top:513px;color:#fff;transform:scaleX(0.934);transform-origin:0 0;">Evasion</div>
<svg style="left:741px;top:515px;color:#134a6b;" width="14" height="14" viewBox="0 0 14 14" preserveAspectRatio="none" fill="currentColor"><path d="M7 1.6Q8.8 0.2 10.6 0.7Q12.6 1.2 13.3 2.6Q13.9 8.6 7 13.6Q0.1 8.6 0.7 2.6Q1.4 1.2 3.4 0.7Q5.2 0.2 7 1.6Z" fill="none" stroke="currentColor" stroke-width="0.9"/></svg>
<div class="sa" style="left:982px;top:514px;border-left-color:#fff"></div>
<div class="t" style="left:763px;top:547px;color:#333;transform:scaleX(0.983);transform-origin:0 0;">Console</div>
<svg style="left:739px;top:549px;color:#000;" width="18" height="12" viewBox="0 0 16 11" preserveAspectRatio="none" fill="currentColor"><rect x="2.5" y="0.5" width="11" height="8" fill="none" stroke="currentColor" stroke-width="1"/><path d="M0 11L1.9 8.3H14.1L16 11Z"/><path d="M4.5 9.6H11.5" stroke="#fff" stroke-width="0.9"/></svg>
<div class="t" style="left:763px;top:581px;color:#333;transform:scaleX(0.973);transform-origin:0 0;">Remote Chat</div>
<svg style="left:740px;top:581px;color:#000;" width="16" height="15" viewBox="0 0 16 15" preserveAspectRatio="none" fill="currentColor"><ellipse cx="8" cy="6" rx="8" ry="6"/><path d="M3.2 10.2L3.2 14.5L7.8 11.5Z"/></svg>
<div class="t" style="left:763px;top:615px;color:#333;transform:scaleX(0.963);transform-origin:0 0;">Send File and Execute</div>
<svg style="left:740px;top:615px;color:#000;" width="16" height="15" viewBox="0 0 16 15" preserveAspectRatio="none" fill="currentColor"><path d="M8 0L12.6 4.7H9.2V9.4H6.8V4.7H3.4Z"/><path d="M0 8.8H2.6V12.3H13.4V8.8H16V15H0Z"/></svg>
<div class="t" style="left:763px;top:649px;color:#333;transform:scaleX(0.979);transform-origin:0 0;">Execute in Memory (Fileless)</div>
<svg style="left:740px;top:649px;color:#000;" width="15" height="14" viewBox="0 0 15 15" preserveAspectRatio="none" fill="currentColor"><g transform="rotate(-40 7.5 7.5)"><rect x="3" y="5.8" width="8" height="3.4"/><path d="M4.5 5.8V9.2M6.5 5.8V9.2M8.5 5.8V9.2" stroke="#fff" stroke-width="0.6"/><rect x="1.6" y="4.6" width="1.2" height="5.8"/><rect x="-0.6" y="6.9" width="2.6" height="1.2"/><rect x="-1" y="5.4" width="0.9" height="4.2"/><path d="M11 7.5H17.5" stroke="currentColor" stroke-width="0.9"/></g></svg>
<div class="t" style="left:763px;top:683px;color:#333;transform:scaleX(0.963);transform-origin:0 0;">Scripts</div>
<svg style="left:740px;top:683px;color:#000;" width="16" height="14" viewBox="0 0 17 15" preserveAspectRatio="none" fill="currentColor"><path d="M1.6 0.2H12.2Q13.3 0.2 13.3 1.3V11.4H3.6V2.6Q3.6 1.2 2.4 1.1Q1.6 1.1 1.4 2.2Q0.4 1.8 0.6 1Q0.8 0.2 1.6 0.2Z"/><path d="M4.6 11.2H16.6V12.6Q16.6 14.8 14.5 14.8H5.2Q3 14.8 3 12.8Q3 11.2 4.6 11.2Z"/><path d="M5.5 12.4H14.8" stroke="#fff" stroke-width="0.7"/></svg>
<div class="t" style="left:763px;top:717px;color:#333;">Printer</div>
<svg style="left:741px;top:719px;color:#9a9a9a;" width="14" height="12" viewBox="0 0 14 12" preserveAspectRatio="none" fill="currentColor"><path d="M3.4 0.5H10.5L11.5 3.5H3.4Z" fill="none" stroke="currentColor" stroke-width="0.8"/><rect x="0.5" y="3.5" width="13" height="6" fill="none" stroke="currentColor" stroke-width="0.8"/><rect x="0.5" y="9.5" width="13" height="2" fill="none" stroke="currentColor" stroke-width="0.8"/><rect x="7" y="5.5" width="5" height="1.5"/></svg>
<div class="t" style="left:763px;top:751px;color:#333;transform:scaleX(1.018);transform-origin:0 0;">Clipboard</div>
<svg style="left:740px;top:749px;color:#000;" width="16" height="19" viewBox="0 0 14 17" preserveAspectRatio="none" fill="currentColor"><rect x="0" y="1.9" width="13.5" height="14.9" rx="0.9"/><path d="M4 3.6L4.6 0.9Q4.8 0.4 5.4 0.4H8.1Q8.7 0.4 8.9 0.9L9.5 3.6Z" fill="#fff" stroke="currentColor" stroke-width="0.9"/></svg>
<div class="t" style="left:763px;top:785px;color:#333;">Crypto Clipper</div>
<svg style="left:742px;top:785px;color:#000;" width="12" height="15" viewBox="0 0 13 15" preserveAspectRatio="none" fill="currentColor"><path d="M4.3 0.2H8.7L7.8 2.6H5.2Z"/><path d="M5 3.2H8Q13 6.5 13 11Q13 15 6.5 15Q0 15 0 11Q0 6.5 5 3.2Z"/><path d="M4.6 3.3H8.4" stroke="#fff" stroke-width="0.6"/><text x="6.5" y="13.3" font-family="Liberation Sans" font-size="8.5" font-weight="bold" text-anchor="middle" fill="#fff">S</text></svg>
<div class="t" style="left:763px;top:819px;color:#333;transform:scaleX(1.01);transform-origin:0 0;">Hardware &amp; Fun</div>
<svg style="left:739px;top:818px;color:#000;" width="12" height="17" viewBox="0 0 12 17" preserveAspectRatio="none" fill="currentColor"><rect x="0.4" y="0.4" width="11.2" height="16.2" fill="none" stroke="currentColor" stroke-width="0.8" stroke-opacity="0.6"/><path d="M5.5 3.3L8 5.5L9.2 4.2L10 8.4L6.2 7.8L7.2 6.8L5.2 5.2L3.6 7.2L2.2 6.3ZM2 8.3L4.7 9.3L3.8 10.3L5.8 12.2L4 13.2L1.8 11.4ZM10.2 9.6L8.8 13.4L6.8 13.1L7.6 12L9.4 10.7L8.4 9.8Z"/></svg>
<div class="t" style="left:763px;top:853px;color:#333;transform:scaleX(1.059);transform-origin:0 0;">Notification</div>
<svg style="left:740px;top:853px;color:#000;" width="15" height="16" viewBox="0 0 15 17" preserveAspectRatio="none" fill="currentColor"><path d="M7.5 0.5Q8.6 0.5 8.6 1.6Q12.3 2.6 12.3 7.5V10.8Q12.6 12.8 15 13.6V14.4H0V13.6Q2.4 12.8 2.7 10.8V7.5Q2.7 2.6 6.4 1.6Q6.4 0.5 7.5 0.5Z"/><path d="M5.2 15.1H9.8Q9.5 16.9 7.5 16.9Q5.5 16.9 5.2 15.1Z"/></svg>
<div class="menu" style="left:995px;top:503px;width:180px;height:146px"></div>
<div class="a" style="left:996px;top:508px;width:178px;height:34px;background:#0096c9"></div>
<div class="t" style="left:1027px;top:518px;color:#fff;transform:scaleX(0.947);transform-origin:0 0;">AMSI Bypass</div>
<svg style="left:1004px;top:517px;color:#000;" width="16" height="16" viewBox="0 0 17 16" preserveAspectRatio="none" fill="currentColor"><circle cx="8.3" cy="8" r="7.2" fill="none" stroke="currentColor" stroke-width="1.5"/><path d="M3.4 13.2L13.4 2.9" stroke="currentColor" stroke-width="1.5"/></svg>
<div class="t" style="left:1027px;top:552px;color:#333;transform:scaleX(0.945);transform-origin:0 0;">ETW Patcher</div>
<svg style="left:1004px;top:556px;color:#000;" width="16" height="8" viewBox="0 0 16 9" preserveAspectRatio="none" fill="currentColor"><path d="M0.5 4.5Q8 -2.2 15.5 4.5Q8 11.2 0.5 4.5Z" fill="none" stroke="currentColor" stroke-width="1"/><circle cx="8" cy="4.6" r="2.9"/><circle cx="8" cy="4.6" r="1.1" fill="#fff"/><path d="M1.5 4.3Q8 9 14.5 4.3" fill="none" stroke="currentColor" stroke-width="1.1"/></svg>
<div class="t" style="left:1027px;top:586px;color:#333;">Process Hollowing</div>
<svg style="left:1005px;top:596px;color:#000;" width="14" height="6" viewBox="0 0 15 6" preserveAspectRatio="none" fill="currentColor"><ellipse cx="7.5" cy="3.1" rx="7.3" ry="2.9"/></svg>
<div class="t" style="left:1027px;top:620px;color:#333;transform:scaleX(1.022);transform-origin:0 0;">Rootkit</div>
<svg style="left:1004px;top:621px;color:#000;" width="9" height="13" viewBox="0 0 10 14" preserveAspectRatio="none" fill="currentColor"><rect x="0.7" y="0.7" width="8.4" height="12.4" fill="none" stroke="currentColor" stroke-width="1.4"/></svg>
</div></div></body></html>
